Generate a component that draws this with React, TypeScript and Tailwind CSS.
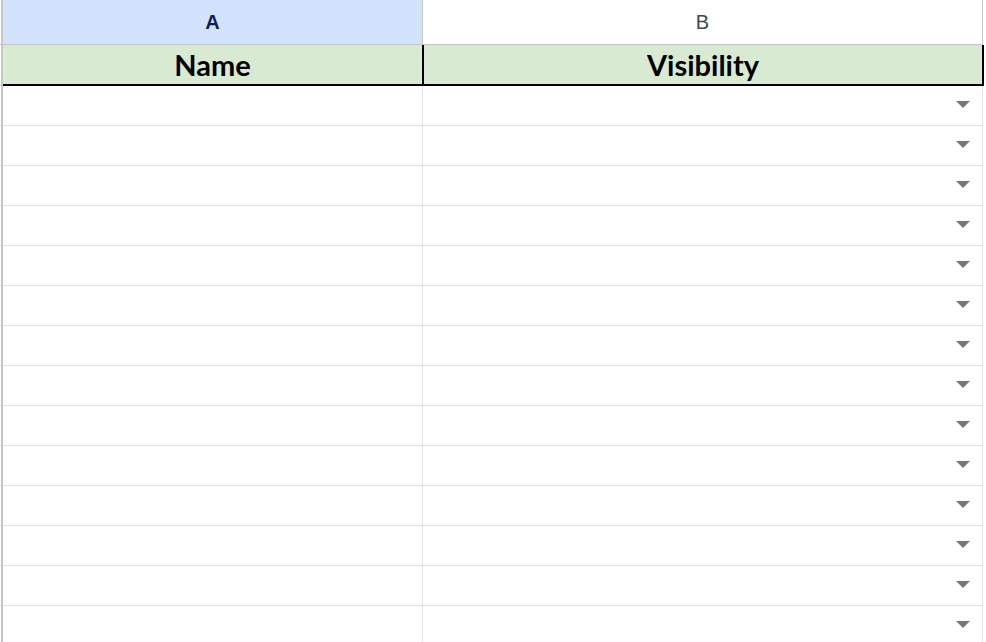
function Caret() {
  return (
    <svg width="14" height="7" viewBox="0 0 14 7" className="block">
      <path d="M0 0h14L7 7z" fill="#777777" />
    </svg>
  );
}

function Gutter({ line }: { line: string }) {
  return <div className={`w-[3px] shrink-0 border-r-2 border-[#c4c7c5] ${line}`} />;
}

export default function App() {
  const rows = Array.from({ length: 14 });

  return (
    <div className="w-[986px] h-[642px] overflow-hidden bg-white font-['Liberation_Sans',Arial,sans-serif]">
      {/* column letters */}
      <div className="flex h-[45px]">
        <Gutter line="border-b border-b-[#c4c7c5]" />
        <div className="w-[420px] shrink-0 flex items-center justify-center bg-[#d3e3fd] border-r border-b border-[#c4c7c5] text-[20px] font-bold text-[#0b1f51]">
          A
        </div>
        <div className="w-[560px] shrink-0 flex items-center justify-center bg-white border-r border-b border-[#c4c7c5] text-[20px] text-[#444746]">
          B
        </div>
      </div>

      {/* header row */}
      <div className="flex h-[41px]">
        <Gutter line="border-b border-b-[#c4c7c5]" />
        <div className="w-[421px] shrink-0 flex items-center justify-center bg-[#d9ead3] border-r-2 border-b-2 border-black text-[29px] font-bold text-black leading-none font-['Lato',sans-serif]">
          Name
        </div>
        <div className="w-[560px] shrink-0 flex items-center justify-center bg-[#d9ead3] border-r-2 border-b-2 border-black text-[29px] font-bold text-black leading-none font-['Lato',sans-serif]">
          Visibility
        </div>
      </div>

      {/* data rows */}
      {rows.map((_, i) => (
        <div key={i} className="flex h-[40px]">
          <Gutter line="border-b border-b-[#e1e1e1]" />
          <div className="w-[420px] shrink-0 border-r border-b border-[#e1e1e1]" />
          <div className="w-[560px] shrink-0 flex justify-end pt-[15px] pr-[12px] border-r border-b border-[#e1e1e1]">
            <Caret />
          </div>
        </div>
      ))}
    </div>
  );
}
